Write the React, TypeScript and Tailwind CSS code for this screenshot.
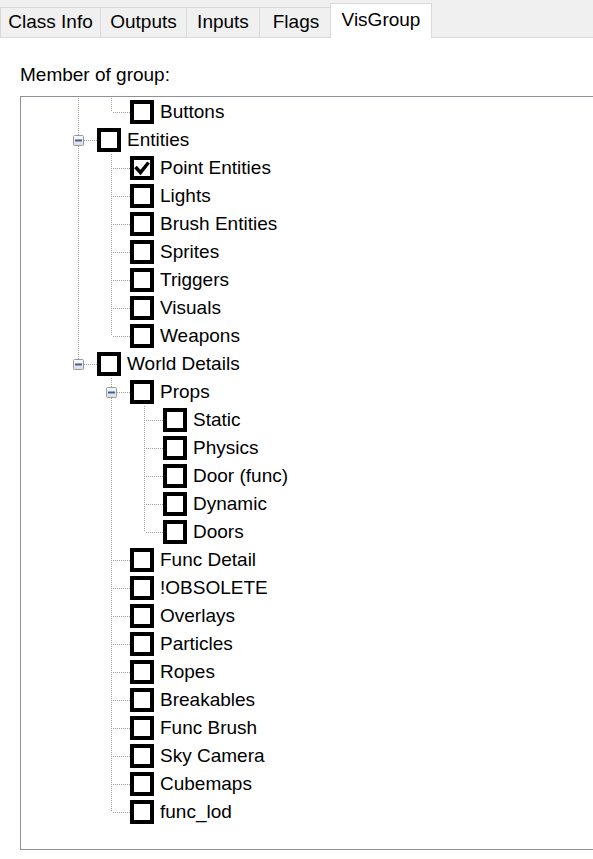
import React from 'react';

interface TreeRow {
  label: string;
  guides: boolean[];
  last: boolean;
  expand?: boolean;
  checked?: boolean;
}

const rows: TreeRow[] = [
  { label: 'Buttons', guides: [true], last: true },
  { label: 'Entities', guides: [], last: false, expand: true },
  { label: 'Point Entities', guides: [true], last: false, checked: true },
  { label: 'Lights', guides: [true], last: false },
  { label: 'Brush Entities', guides: [true], last: false },
  { label: 'Sprites', guides: [true], last: false },
  { label: 'Triggers', guides: [true], last: false },
  { label: 'Visuals', guides: [true], last: false },
  { label: 'Weapons', guides: [true], last: true },
  { label: 'World Details', guides: [], last: true, expand: true },
  { label: 'Props', guides: [false], last: false, expand: true },
  { label: 'Static', guides: [false, true], last: false },
  { label: 'Physics', guides: [false, true], last: false },
  { label: 'Door (func)', guides: [false, true], last: false },
  { label: 'Dynamic', guides: [false, true], last: false },
  { label: 'Doors', guides: [false, true], last: true },
  { label: 'Func Detail', guides: [false], last: false },
  { label: '!OBSOLETE', guides: [false], last: false },
  { label: 'Overlays', guides: [false], last: false },
  { label: 'Particles', guides: [false], last: false },
  { label: 'Ropes', guides: [false], last: false },
  { label: 'Breakables', guides: [false], last: false },
  { label: 'Func Brush', guides: [false], last: false },
  { label: 'Sky Camera', guides: [false], last: false },
  { label: 'Cubemaps', guides: [false], last: false },
  { label: 'func_lod', guides: [false], last: true },
];

const tabs = [
  { label: 'Class Info', width: 'w-[100px]' },
  { label: 'Outputs', width: 'w-[86px]' },
  { label: 'Inputs', width: 'w-[73px]' },
  { label: 'Flags', width: 'w-[73px]' },
];

function Guide({ on }: { on: boolean }) {
  return (
    <svg width="33" height="28" className="shrink-0">
      {on && <line x1="16.5" y1="0" x2="16.5" y2="28" stroke="#a0a0a0" strokeDasharray="1 1" />}
    </svg>
  );
}

function Connector({ last, expand }: { last: boolean; expand?: boolean }) {
  return (
    <svg width="35" height="28" className="shrink-0">
      <line x1="16.5" y1="0" x2="16.5" y2={last ? 14 : 28} stroke="#a0a0a0" strokeDasharray="1 1" />
      <line x1="18" y1="14.5" x2="35" y2="14.5" stroke="#a0a0a0" strokeDasharray="1 1" />
      {expand && (
        <g>
          <defs>
            <linearGradient id="exp" x1="0" y1="0" x2="0" y2="1">
              <stop offset="0" stopColor="#fbfbfb" />
              <stop offset="1" stopColor="#dcdcdc" />
            </linearGradient>
          </defs>
          <rect x="11.5" y="9.5" width="10" height="10" rx="1" fill="url(#exp)" stroke="#9a9a9a" />
          <rect x="13" y="13.5" width="7" height="2" fill="#3d5ea8" />
        </g>
      )}
    </svg>
  );
}

function CheckBox({ checked }: { checked?: boolean }) {
  return (
    <div className="size-[24px] shrink-0 border-[4px] border-black bg-white">
      {checked && (
        <svg width="16" height="16" viewBox="4 4 16 16">
          <polyline points="5.5,11 10.5,16.5 18.5,6.5" fill="none" stroke="#000" strokeWidth="3.5" />
        </svg>
      )}
    </div>
  );
}

export default function App() {
  return (
    <div className="h-[859px] w-[593px] overflow-hidden bg-white font-['Liberation_Sans',Arial,sans-serif] text-[19px] text-black">
      <div className="flex h-[38px] items-end border-b border-[#d9d9d9] bg-[#f0f0f0]">
        {tabs.map((t) => (
          <div
            key={t.label}
            className={`${t.width} flex h-[30px] shrink-0 items-center justify-center border-l border-t border-[#d9d9d9]`}
          >
            {t.label}
          </div>
        ))}
        <div className="relative z-10 -mb-px ml-[-2px] flex h-[35px] w-[102px] shrink-0 items-center justify-center border-x border-t border-[#d9d9d9] bg-white pb-[2px]">
          VisGroup
        </div>
      </div>

      <div className="pl-[20px] pt-[26px] leading-[22px]">Member of group:</div>

      <div className="ml-[20px] mt-[10px] h-[754px] w-[600px] border border-[#8c9099] pt-px">
        {rows.map((r) => (
          <div key={r.label} className="flex h-[28px] items-center pl-[41px]">
            {r.guides.map((g, i) => (
              <Guide key={i} on={g} />
            ))}
            <Connector last={r.last} expand={r.expand} />
            <CheckBox checked={r.checked} />
            <span className="ml-[6px] whitespace-nowrap">{r.label}</span>
          </div>
        ))}
      </div>
    </div>
  );
}
